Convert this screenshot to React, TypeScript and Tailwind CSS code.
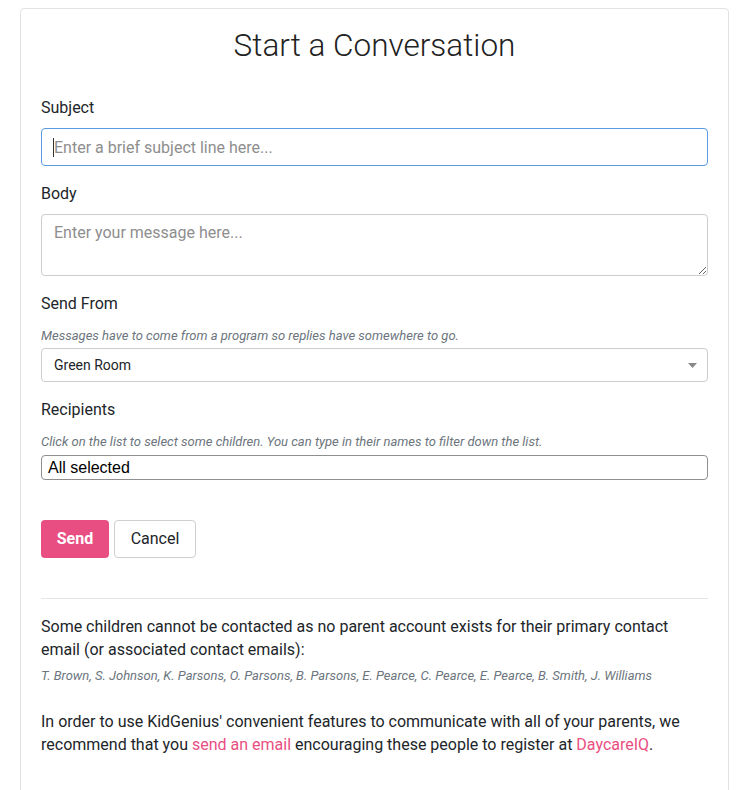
export default function App() {
  const missing = [
    'T. Brown',
    'S. Johnson',
    'K. Parsons',
    'O. Parsons',
    'B. Parsons',
    'E. Pearce',
    'C. Pearce',
    'E. Pearce',
    'B. Smith',
    'J. Williams',
  ];

  return (
    <div className="min-h-screen bg-white pl-[20px] pr-[22px] pt-[8px] font-['Roboto',sans-serif] text-[#212529]">
      <div className="rounded-[4px] border border-[#e2e2e2] px-[20px] pt-[18px] pb-[40px]">
        <h1 className="text-center text-[31.5px] font-light leading-[38px] text-[#222]">
          Start a Conversation
        </h1>

        <div className="mt-[31px]">
          <label className="block text-[16px] leading-[24px]">Subject</label>
          <div className="relative mt-[8px]">
            <input
              type="text"
              placeholder="Enter a brief subject line here..."
              className="h-[38px] w-full rounded-[4px] border border-[#5a9ae0] px-[12px] text-[16px] outline-none placeholder:text-[#8e8e8e]"
            />
            <div className="absolute left-[12px] top-[10px] h-[19px] w-px bg-[#333]" />
          </div>
        </div>

        <div className="mt-[16px]">
          <label className="block text-[16px] leading-[24px]">Body</label>
          <textarea
            placeholder="Enter your message here..."
            className="mt-[8px] block h-[62px] w-full rounded-[4px] border border-[#cdcdcd] px-[12px] py-[6px] text-[16px] leading-[24px] outline-none placeholder:text-[#8e8e8e]"
          />
        </div>

        <div className="mt-[16px]">
          <label className="block text-[16px] leading-[24px]">Send From</label>
          <p className="mt-[10px] text-[13px] italic leading-[19px] text-[#6c757d]">
            Messages have to come from a program so replies have somewhere to go.
          </p>
          <div className="mt-[3px] flex h-[34px] items-center justify-between rounded-[4px] border border-[#cdcdcd] px-[12px] text-[14px]">
            <span>Green Room</span>
            <svg width="9" height="5" viewBox="0 0 9 5" className="mr-[-2px]">
              <path d="M0 0h9L4.5 5z" fill="#888" />
            </svg>
          </div>
        </div>

        <div className="mt-[16px]">
          <label className="block text-[16px] leading-[24px]">Recipients</label>
          <p className="mt-[10px] text-[13px] italic leading-[19px] text-[#6c757d]">
            Click on the list to select some children. You can type in their names to filter down the list.
          </p>
          <div className="mt-[4px] flex h-[25px] items-center rounded-[4px] border border-[#8f8f8f] px-[6px] font-['Liberation_Sans',Arial,sans-serif] text-[16px] text-black">
            All selected
          </div>
        </div>

        <div className="mt-[40px] flex gap-[5px]">
          <button className="h-[38px] w-[68px] rounded-[4px] bg-[#e94e82] text-[16px] font-bold text-white">
            Send
          </button>
          <button className="h-[38px] w-[82px] rounded-[4px] border border-[#cfcfcf] bg-white text-[16px] text-[#212529]">
            Cancel
          </button>
        </div>

        <hr className="mt-[40px] border-t border-[#e5e5e5]" />

        <p className="mt-[16px] text-[16px] leading-[23px]">
          Some children cannot be contacted as no parent account exists for their primary contact email (or associated contact emails):
        </p>
        <p className="mt-[5px] text-[13px] italic leading-[19px] text-[#6c757d]">
          {missing.join(', ')}
        </p>

        <p className="mt-[25px] text-[16px] leading-[23px]">
          In order to use KidGenius' convenient features to communicate with all of your parents, we recommend that you{' '}
          <a className="text-[#e94e82]" href="#">
            send an email
          </a>{' '}
          encouraging these people to register at{' '}
          <a className="text-[#e94e82]" href="#">
            DaycareIQ
          </a>
          .
        </p>
      </div>
    </div>
  );
}
